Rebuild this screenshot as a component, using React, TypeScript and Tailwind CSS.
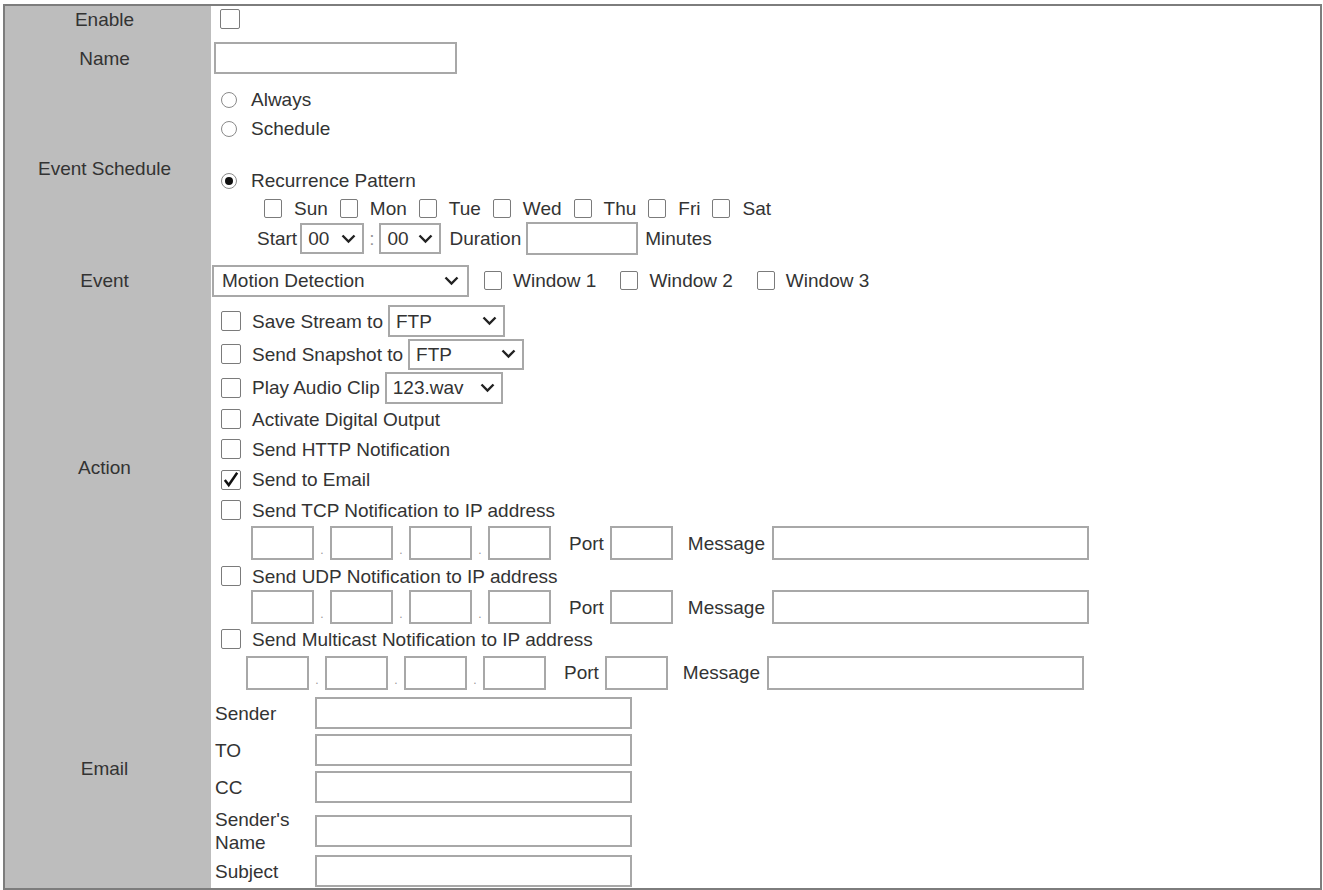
import React from "react";

function Chevron() {
  return (
    <svg width="15" height="10" viewBox="0 0 15 10" className="shrink-0">
      <polyline points="1.5,1.5 7.5,7.5 13.5,1.5" fill="none" stroke="#222" strokeWidth="2.4" />
    </svg>
  );
}

function Box({ checked = false, className = "h-[20px] w-[20px]" }: { checked?: boolean; className?: string }) {
  return (
    <span className={`relative inline-block shrink-0 rounded-[2px] border-[1.5px] border-[#7b7b7b] bg-white ${className}`}>
      {checked && (
        <svg viewBox="0 0 16 16" className="absolute inset-0 h-full w-full">
          <path d="M2.5 8 L6 12.5 L13.5 1.5" fill="none" stroke="#111" strokeWidth="2.2" />
        </svg>
      )}
    </span>
  );
}

function Radio({ checked = false }: { checked?: boolean }) {
  return (
    <span className="flex h-[16px] w-[16px] shrink-0 items-center justify-center rounded-full border-[1.5px] border-[#8a8a8a] bg-white">
      {checked && <span className="h-[8px] w-[8px] rounded-full bg-[#111]" />}
    </span>
  );
}

function Field({ className }: { className: string }) {
  return <span className={`block shrink-0 border-2 border-[#a8a8a8] bg-white ${className}`} />;
}

function Select({ value, className }: { value: string; className: string }) {
  return (
    <span className={`flex shrink-0 items-center justify-between border-2 border-[#a8a8a8] bg-white pl-[6px] pr-[6px] ${className}`}>
      <span>{value}</span>
      <Chevron />
    </span>
  );
}

function Label({ children, className = "" }: { children: React.ReactNode; className?: string }) {
  return <div className={`flex items-center justify-center bg-[#bdbdbd] pr-[7px] ${className}`}>{children}</div>;
}

function CheckRow({ text, className, checked = false, children }: { text: string; className: string; checked?: boolean; children?: React.ReactNode }) {
  return (
    <div className={`flex items-center ${className}`}>
      <Box checked={checked} />
      <span className="ml-[11px]">{text}</span>
      {children}
    </div>
  );
}

function IpRow({ className, shift }: { className: string; shift: string }) {
  return (
    <div className={`flex items-center ${className}`}>
      <div className={`flex items-center ${shift}`}>
        {[0, 1, 2, 3].map((i) => (
          <React.Fragment key={i}>
            {i > 0 && <span className="w-[16px] self-end pb-[4px] text-center text-[12px] leading-none text-[#999]">.</span>}
            <Field className="h-[34px] w-[63px]" />
          </React.Fragment>
        ))}
        <span className="ml-[18px]">Port</span>
        <Field className="ml-[6px] h-[34px] w-[63px]" />
        <span className="ml-[15px]">Message</span>
        <Field className="ml-[7px] h-[34px] w-[317px]" />
      </div>
    </div>
  );
}

const DAYS = ["Sun", "Mon", "Tue", "Wed", "Thu", "Fri", "Sat"];

const EMAIL_ROWS = [
  { label: "Sender", row: "h-[34px]" },
  { label: "TO", row: "mt-[3px] h-[34px]" },
  { label: "CC", row: "mt-[3px] h-[34px]" },
  { label: "Sender's Name", row: "mt-[4px] h-[46px]" },
  { label: "Subject", row: "h-[34px]" },
];

export default function App() {
  return (
    <div className="min-h-screen bg-white font-['Liberation_Sans',Arial,sans-serif] text-[19px] leading-none text-[#333]">
      <div className="ml-[3px] mt-[4px] grid h-[886px] w-[1319px] grid-cols-[206px_1fr] border-2 border-[#7d7d7d]">
        <Label>Enable</Label>
        <div className="flex h-[26px] items-center pl-[9px]">
          <Box />
        </div>

        <Label>Name</Label>
        <div className="flex h-[52px] items-center pl-[3px]">
          <Field className="h-[32px] w-[243px]" />
        </div>

        <Label className="pb-[4px]">Event Schedule</Label>
        <div className="flex h-[172px] flex-col pt-[1px]">
          <div className="flex h-[29px] items-center gap-[14px] pl-[10px]">
            <Radio />
            <span>Always</span>
          </div>
          <div className="flex h-[29px] items-center gap-[14px] pl-[10px]">
            <Radio />
            <span>Schedule</span>
          </div>
          <div className="h-[23px]" />
          <div className="flex h-[29px] items-center gap-[14px] pl-[10px]">
            <Radio checked />
            <span>Recurrence Pattern</span>
          </div>
          <div className="flex h-[26px] items-center gap-[12px] pl-[53px]">
            {DAYS.map((d) => (
              <span key={d} className="flex items-center gap-[12px]">
                <Box className="h-[19px] w-[18px]" />
                <span>{d}</span>
              </span>
            ))}
          </div>
          <div className="flex h-[35px] items-center pl-[46px]">
            <span>Start</span>
            <Select value="00" className="ml-[3px] h-[31px] w-[64px]" />
            <span className="ml-[5px] text-[#999]">:</span>
            <Select value="00" className="ml-[5px] h-[31px] w-[62px]" />
            <span className="ml-[8px]">Duration</span>
            <Field className="ml-[5px] h-[33px] w-[112px]" />
            <span className="ml-[7px]">Minutes</span>
          </div>
        </div>

        <Label>Event</Label>
        <div className="flex h-[49px] items-center pl-[1px]">
          <Select value="Motion Detection" className="h-[32px] w-[257px] pl-[8px] pr-[8px]" />
          <Box className="ml-[15px] h-[19px] w-[18px]" />
          <span className="ml-[11px]">Window 1</span>
          <Box className="ml-[24px] h-[19px] w-[18px]" />
          <span className="ml-[11px]">Window 2</span>
          <Box className="ml-[24px] h-[19px] w-[18px]" />
          <span className="ml-[11px]">Window 3</span>
        </div>

        <Label className="pb-[61px]">Action</Label>
        <div className="flex h-[385px] flex-col pl-[10px]">
          <CheckRow text="Save Stream to" className="h-[32px]">
            <Select value="FTP" className="ml-[5px] h-[32px] w-[117px]" />
          </CheckRow>
          <CheckRow text="Send Snapshot to" className="h-[34px]">
            <Select value="FTP" className="ml-[5px] h-[31px] w-[116px]" />
          </CheckRow>
          <CheckRow text="Play Audio Clip" className="h-[33px]">
            <Select value="123.wav" className="ml-[5px] h-[32px] w-[118px]" />
          </CheckRow>
          <CheckRow text="Activate Digital Output" className="h-[30px]" />
          <CheckRow text="Send HTTP Notification" className="h-[30px]" />
          <CheckRow text="Send to Email" className="h-[31px]" checked />
          <CheckRow text="Send TCP Notification to IP address" className="h-[30px]" />
          <IpRow className="h-[36px]" shift="ml-[30px]" />
          <CheckRow text="Send UDP Notification to IP address" className="h-[30px]" />
          <IpRow className="h-[32px]" shift="ml-[30px]" />
          <CheckRow text="Send Multicast Notification to IP address" className="h-[32px]" />
          <IpRow className="h-[35px]" shift="ml-[25px]" />
        </div>

        <Label className="pb-[42px]">Email</Label>
        <div className="flex h-[198px] flex-col pl-[4px] pt-[6px]">
          {EMAIL_ROWS.map((r) => (
            <div key={r.label} className={`flex items-center ${r.row}`}>
              <span className="w-[100px] leading-[23px]">{r.label}</span>
              <Field className="h-[32px] w-[317px]" />
            </div>
          ))}
        </div>
      </div>
    </div>
  );
}
